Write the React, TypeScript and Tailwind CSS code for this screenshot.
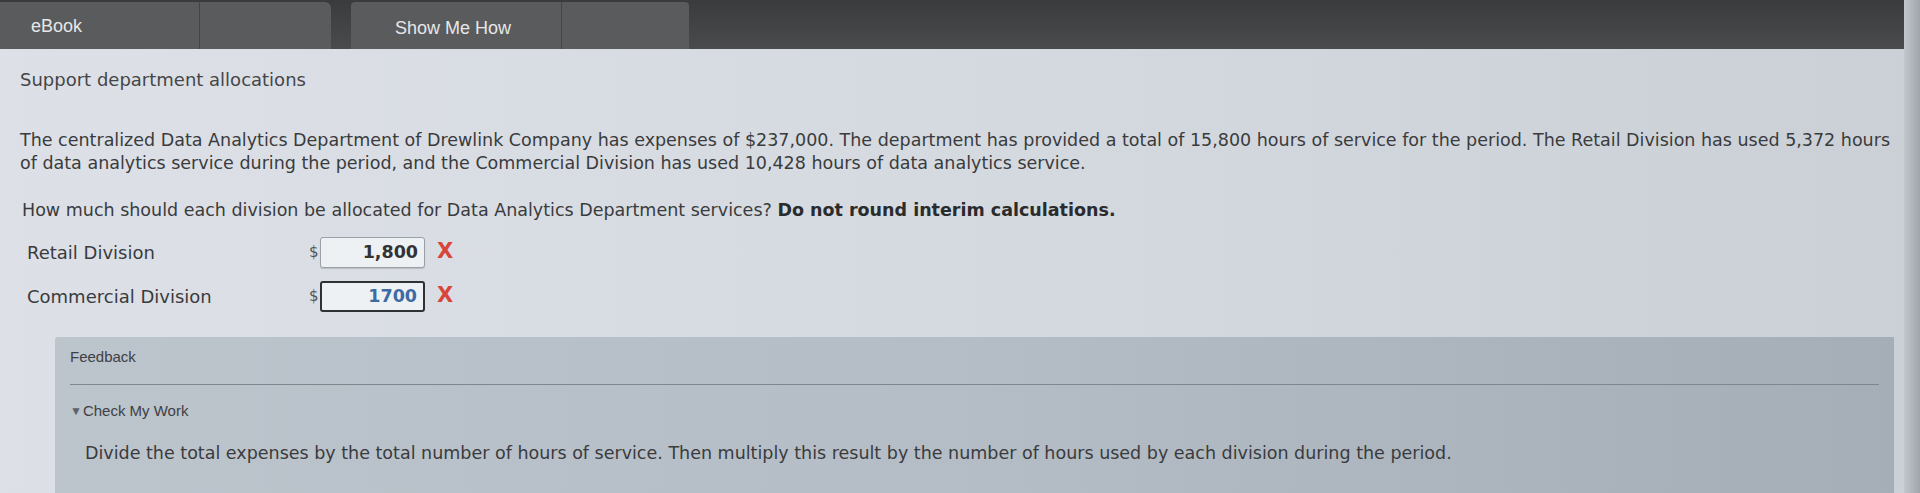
import React from 'react';

const answers = [
  { label: 'Retail Division', value: '1,800', focused: false },
  { label: 'Commercial Division', value: '1700', focused: true },
];

export default function App() {
  return (
    <div className="w-[1920px] h-[493px] overflow-hidden flex bg-gradient-to-r from-[#dde1e7] via-[#d5dae0] to-[#cbd0d6] font-[family-name:DejaVu_Sans,Verdana,sans-serif] text-[#3a3b3d]">
      <div className="flex-1 flex flex-col min-w-0">
        {/* Top tabs */}
        <div className="flex-shrink-0 h-[49px] flex bg-gradient-to-b from-[#3a3b3d] to-[#4a4b4d] font-[family-name:Liberation_Sans,Arial,sans-serif] text-[18px] text-[#e6e7e8]">
          <div className="flex h-[47px] mt-[2px] w-[331px] bg-[#5a5b5d] rounded-tr-[6px] overflow-hidden">
            <div className="w-[200px] h-full border-r border-[#444547] pl-[31px] pt-[11px]">eBook</div>
            <div className="flex-1" />
          </div>
          <div className="w-[20px]" />
          <div className="flex h-[47px] mt-[2px] w-[338px] bg-[#5a5b5d] rounded-t-[4px] overflow-hidden">
            <div className="w-[211px] h-full border-r border-[#444547] flex items-center justify-center pr-[6px] pt-[5px]">
              Show Me How
            </div>
            <div className="flex-1" />
          </div>
        </div>

        {/* Content */}
        <div className="flex-1 flex flex-col pl-[20px] pr-[10px]">
          <h2 className="mt-[19px] text-[18px] leading-[24px] text-[#454649]">Support department allocations</h2>

          <p className="mt-[37px] text-[17.5px] leading-[23px] whitespace-nowrap">
            The centralized Data Analytics Department of Drewlink Company has expenses of $237,000. The department has provided a total of 15,800 hours of service for the period. The Retail Division has used 5,372 hours
            <br />
            of data analytics service during the period, and the Commercial Division has used 10,428 hours of data analytics service.
          </p>

          <p className="mt-[24px] pl-[2px] text-[17.5px] leading-[23px] whitespace-nowrap">
            How much should each division be allocated for Data Analytics Department services?{' '}
            <span className="font-bold text-[#2a2b2d]">Do not round interim calculations.</span>
          </p>

          <div className="mt-[8px] flex flex-col">
            {answers.map((a) => (
              <div key={a.label} className="h-[44px] flex items-center text-[18px]">
                <span className="w-[289px] pl-[7px]">{a.label}</span>
                <span className="w-[11px] text-[15px] text-[#555]">$</span>
                <div
                  className={`w-[105px] h-[31px] flex items-center justify-end pr-[6px] rounded-[3px] bg-[#eef1f4] font-bold text-[17.5px] ${
                    a.focused
                      ? 'border-2 border-[#2f3134] text-[#3d6ba3]'
                      : 'border border-[#9aa0a7] text-[#333] shadow-[0_1px_1px_rgba(0,0,0,0.15)]'
                  }`}
                >
                  {a.value}
                </div>
                <span className="ml-[12px] text-[#d8453a] font-bold text-[21px]">X</span>
              </div>
            ))}
          </div>

          {/* Feedback */}
          <div className="mt-[19px] ml-[35px] flex-1 bg-gradient-to-r from-[#bcc4cc] via-[#b4bdc6] to-[#a5aeb7] rounded-tl-[3px] px-[15px]">
            <div className="pt-[11px] h-[47px] font-[family-name:Liberation_Sans,Arial,sans-serif] text-[15px] text-[#3e4043] leading-[18px]">
              Feedback
            </div>
            <div className="h-[1px] bg-[#7f868d]" />
            <div className="mt-[17px] flex items-center gap-[1px] font-[family-name:Liberation_Sans,Arial,sans-serif] text-[15px] text-[#3e4043] leading-[18px]">
              <span className="text-[12px] text-[#5e6267]">▼</span>
              Check My Work
            </div>
            <p className="mt-[22px] pl-[15px] text-[17.5px] leading-[23px] text-[#3a3b3d]">
              Divide the total expenses by the total number of hours of service. Then multiply this result by the number of hours used by each division during the period.
            </p>
          </div>
        </div>
      </div>
      <div className="w-[16px] flex-shrink-0 bg-gradient-to-r from-[#c2c7cc] to-[#9fa5ab]" />
    </div>
  );
}
